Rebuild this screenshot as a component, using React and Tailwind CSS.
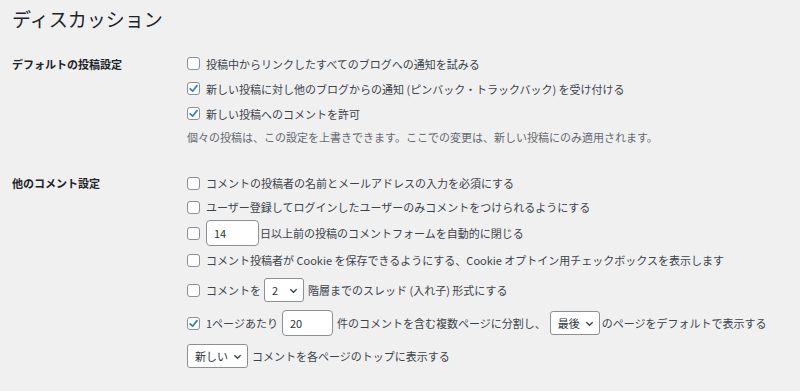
import React from "react";

const font = { fontFamily: '"Noto Sans CJK JP", "Noto Sans", sans-serif' };

function Check({ checked }) {
  return (
    <span className="relative inline-block w-[13px] h-[13px] shrink-0 rounded-[3px] border border-[#8c8f94] bg-white">
      {checked && (
        <svg viewBox="0 0 13 13" className="absolute left-[-1px] top-[-1px] w-[13px] h-[13px]">
          <path d="M3.2 6.8 L5.6 9.2 L10 3.6" fill="none" stroke="#3582c4" strokeWidth="1.8" strokeLinecap="round" strokeLinejoin="round" />
        </svg>
      )}
    </span>
  );
}

function Input({ value, w }) {
  return (
    <span className={`inline-flex items-center h-[26px] ${w} shrink-0 rounded-[4px] border border-[#8c8f94] bg-white px-[7px] text-[11px] text-[#2c3338]`}>
      {value}
    </span>
  );
}

function Select({ value, w }) {
  return (
    <span className={`inline-flex items-center justify-between h-[24px] ${w} shrink-0 rounded-[3px] border border-[#8c8f94] bg-white pl-[7px] pr-[5px] text-[11px] text-[#2c3338]`}>
      <span>{value}</span>
      <svg viewBox="0 0 10 10" className="w-[9px] h-[9px]">
        <path d="M1.5 3.5 L5 7 L8.5 3.5" fill="none" stroke="#3c434a" strokeWidth="1.5" />
      </svg>
    </span>
  );
}

function Row({ h, children }) {
  return <div className={`flex items-center ${h} whitespace-nowrap`}>{children}</div>;
}

export default function App() {
  return (
    <div style={font} className="w-[800px] h-[391px] bg-[#f0f0f1] text-[#3c434a] text-[11px] leading-[16px] pl-[12px] overflow-hidden">
      <div className="pt-[6px] h-[51px]">
        <h1 className="text-[19px] leading-[26px] font-normal text-[#1d2327]">ディスカッション</h1>
      </div>

      <div className="flex">
        <div className="w-[175px] shrink-0 h-[25px] flex items-center font-bold text-[#1d2327]">デフォルトの投稿設定</div>
        <div>
          <Row h="h-[25px]"><Check /><span className="ml-[6px]">投稿中からリンクしたすべてのブログへの通知を試みる</span></Row>
          <Row h="h-[25px]"><Check checked /><span className="ml-[6px]">新しい投稿に対し他のブログからの通知 (ピンバック・トラックバック) を受け付ける</span></Row>
          <Row h="h-[25px]"><Check checked /><span className="ml-[6px]">新しい投稿へのコメントを許可</span></Row>
          <Row h="h-[22px]"><span className="text-[#646970]">個々の投稿は、この設定を上書きできます。ここでの変更は、新しい投稿にのみ適用されます。</span></Row>
        </div>
      </div>

      <div className="flex mt-[23px]">
        <div className="w-[175px] shrink-0 h-[24px] flex items-center font-bold text-[#1d2327]">他のコメント設定</div>
        <div>
          <Row h="h-[24px]"><Check /><span className="ml-[6px]">コメントの投稿者の名前とメールアドレスの入力を必須にする</span></Row>
          <Row h="h-[24px]"><Check /><span className="ml-[6px]">ユーザー登録してログインしたユーザーのみコメントをつけられるようにする</span></Row>
          <Row h="h-[28px]"><Check /><span className="ml-[6px]"><Input value="14" w="w-[53px]" /></span><span className="ml-[1px]">日以上前の投稿のコメントフォームを自動的に閉じる</span></Row>
          <Row h="h-[26px]"><Check /><span className="ml-[6px]">コメント投稿者が Cookie を保存できるようにする、Cookie オプトイン用チェックボックスを表示します</span></Row>
          <Row h="h-[34px]"><Check /><span className="ml-[6px]">コメントを</span><span className="ml-[3px]"><Select value="2" w="w-[40px]" /></span><span className="ml-[4px]">階層までのスレッド (入れ子) 形式にする</span></Row>
          <Row h="h-[32px]"><Check checked /><span className="ml-[6px]">1ページあたり</span><span className="ml-[4px]"><Input value="20" w="w-[51px]" /></span><span className="ml-[4px]">件のコメントを含む複数ページに分割し、</span><span className="ml-[4px]"><Select value="最後" w="w-[50px]" /></span><span className="ml-[2px]">のページをデフォルトで表示する</span></Row>
          <Row h="h-[34px]"><Select value="新しい" w="w-[61px]" /><span className="ml-[4px]">コメントを各ページのトップに表示する</span></Row>
        </div>
      </div>
    </div>
  );
}
